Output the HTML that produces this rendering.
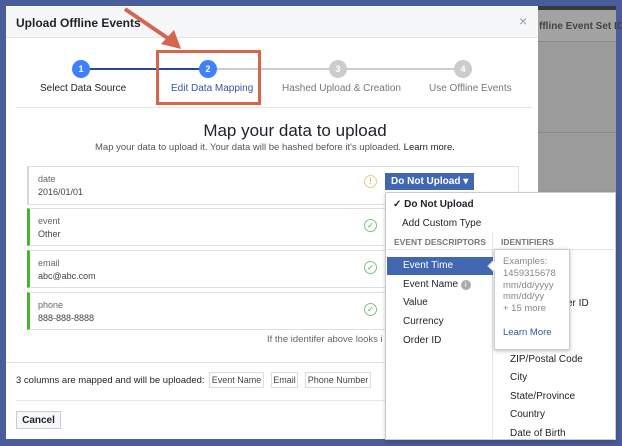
<!DOCTYPE html>
<html><head><style>
*{margin:0;padding:0;box-sizing:border-box}
body{width:622px;height:446px;overflow:hidden;background:#4a5c9c;font-family:"Liberation Sans",sans-serif;position:relative;color:#1d2129}
.a{position:absolute}
.t{position:absolute;white-space:nowrap}
</style></head><body>
<div class="a" style="left:538px;top:6px;width:78px;height:434px;background:#9b9b9b"></div>
<div class="a" style="left:538px;top:6px;width:78px;height:4px;background:#3a3a3a"></div>
<div class="a" style="left:538px;top:10px;width:78px;height:32px;background:#a3a3a3;border-bottom:1px solid #888"></div>
<div class="t" style="left:539px;top:21px;font-size:10px;font-weight:bold;color:#444">ffline Event Set ID</div>
<div class="a" style="left:538px;top:132px;width:78px;height:1px;background:#888"></div>
<div class="a" style="left:6px;top:6px;width:532px;height:433px;background:#fff"></div>
<div class="a" style="left:6px;top:6px;width:532px;height:32px;background:#f6f7f9;border-bottom:1px solid #e5e5e5"></div>
<div class="t" style="left:16px;top:16px;font-size:12px;font-weight:bold">Upload Offline Events</div>
<div class="t" style="left:519px;top:13px;font-size:14px;color:#999">×</div>
<div class="a" style="left:81px;top:68px;width:127px;height:2px;background:#2c4a8c"></div>
<div class="a" style="left:208px;top:68px;width:255px;height:2px;background:#ccc"></div>
<div class="a" style="left:72px;top:60px;width:18px;height:18px;border-radius:50%;background:#4080ff;color:#fff;font-size:9px;font-weight:bold;text-align:center;line-height:18px">1</div>
<div class="a" style="left:199px;top:60px;width:18px;height:18px;border-radius:50%;background:#4080ff;color:#fff;font-size:9px;font-weight:bold;text-align:center;line-height:18px">2</div>
<div class="a" style="left:329px;top:60px;width:18px;height:18px;border-radius:50%;background:#ccc;color:#fff;font-size:9px;font-weight:bold;text-align:center;line-height:18px">3</div>
<div class="a" style="left:454px;top:60px;width:18px;height:18px;border-radius:50%;background:#ccc;color:#fff;font-size:9px;font-weight:bold;text-align:center;line-height:18px">4</div>
<div class="t" style="left:40px;top:83px;font-size:10px">Select Data Source</div>
<div class="t" style="left:171px;top:83px;font-size:10px;color:#365899">Edit Data Mapping</div>
<div class="t" style="left:282px;top:83px;font-size:10px;color:#777">Hashed Upload &amp; Creation</div>
<div class="t" style="left:429px;top:83px;font-size:10px;color:#777">Use Offline Events</div>
<div class="a" style="left:16px;top:107px;width:516px;height:1px;background:#e5e5e5"></div>
<div class="a" style="left:156px;top:50px;width:105px;height:55px;border:3px solid #d5654f"></div>
<svg class="a" style="left:115px;top:3px" width="80" height="50"><path d="M10 6 L54 36" stroke="#d5654f" stroke-width="4"/><path d="M46 41 L66 46 L59 27 Z" fill="#d5654f"/></svg>
<div class="t" style="left:0;width:540px;top:121px;text-align:center;font-size:17px;padding-left:50px">Map your data to upload</div>
<div class="t" style="left:95px;top:142px;font-size:9.5px;color:#555">Map your data to upload it. Your data will be hashed before it's uploaded. <span style="color:#1d2129">Learn more.</span></div>
<div class="a" style="left:27px;top:166px;width:492px;height:39px;border:1px solid #e0e0e0;border-left:2px solid #d8d8d8"></div>
<div class="t" style="left:38px;top:174px;font-size:9px;color:#666">date</div>
<div class="t" style="left:38px;top:187px;font-size:9px;color:#444">2016/01/01</div>
<div class="a" style="left:364px;top:175px;width:13px;height:13px;border-radius:50%;border:1px solid #e8c98a;color:#d9a441;font-size:9px;text-align:center;line-height:11px">!</div>
<div class="a" style="left:27px;top:208px;width:492px;height:38px;border:1px solid #e0e0e0;border-left:3px solid #42b72a"></div>
<div class="t" style="left:38px;top:216px;font-size:9px;color:#666">event</div>
<div class="t" style="left:38px;top:229px;font-size:9px;color:#444">Other</div>
<div class="a" style="left:364px;top:219px;width:13px;height:13px;border-radius:50%;border:1px solid #7bc47f;color:#42b72a;font-size:8px;text-align:center;line-height:11px">✓</div>
<div class="a" style="left:27px;top:250px;width:492px;height:38px;border:1px solid #e0e0e0;border-left:3px solid #42b72a"></div>
<div class="t" style="left:38px;top:258px;font-size:9px;color:#666">email</div>
<div class="t" style="left:38px;top:271px;font-size:9px;color:#444">abc@abc.com</div>
<div class="a" style="left:364px;top:261px;width:13px;height:13px;border-radius:50%;border:1px solid #7bc47f;color:#42b72a;font-size:8px;text-align:center;line-height:11px">✓</div>
<div class="a" style="left:27px;top:292px;width:492px;height:38px;border:1px solid #e0e0e0;border-left:3px solid #42b72a"></div>
<div class="t" style="left:38px;top:300px;font-size:9px;color:#666">phone</div>
<div class="t" style="left:38px;top:313px;font-size:9px;color:#444">888-888-8888</div>
<div class="a" style="left:364px;top:303px;width:13px;height:13px;border-radius:50%;border:1px solid #7bc47f;color:#42b72a;font-size:8px;text-align:center;line-height:11px">✓</div>
<div class="t" style="left:267px;top:334px;font-size:9.5px;color:#666">If the identifer above looks i</div>
<div class="a" style="left:6px;top:362px;width:532px;height:1px;background:#e0e0e0"></div>
<div class="t" style="left:16px;top:375px;font-size:9.5px">3 columns are mapped and will be uploaded:</div>
<div class="t" style="left:209px;top:372px;width:55px;font-size:9px;color:#444;border:1px solid #ddd;padding:2px 0;text-align:center">Event Name</div>
<div class="t" style="left:271px;top:372px;width:27px;font-size:9px;color:#444;border:1px solid #ddd;padding:2px 0;text-align:center">Email</div>
<div class="t" style="left:305px;top:372px;width:66px;font-size:9px;color:#444;border:1px solid #ddd;padding:2px 0;text-align:center">Phone Number</div>
<div class="a" style="left:16px;top:400px;width:520px;height:1px;background:#e5e5e5"></div>
<div class="t" style="left:16px;top:411px;width:45px;height:18px;font-size:10px;font-weight:bold;border:1px solid #ccc;background:#f6f7f9;text-align:center;line-height:17px">Cancel</div>
<div class="t" style="left:385px;top:173px;width:89px;height:17px;background:#4267b2;color:#fff;font-size:10px;font-weight:bold;line-height:17px;padding-left:6px">Do Not Upload ▾</div>
<div class="a" style="left:385px;top:192px;width:231px;height:248px;background:#fff;border:1px solid #ccc;box-shadow:0 2px 4px rgba(0,0,0,.2)"></div>
<div class="a" style="left:492px;top:232px;width:1px;height:208px;background:#e5e5e5"></div>
<div class="a" style="left:386px;top:249px;width:230px;height:1px;background:#e5e5e5"></div>
<div class="t" style="left:393px;top:199px;font-size:10px;font-weight:bold">✓ Do Not Upload</div>
<div class="t" style="left:402px;top:218px;font-size:10px">Add Custom Type</div>
<div class="t" style="left:394px;top:237px;font-size:8.5px;color:#777;font-weight:bold">EVENT DESCRIPTORS</div>
<div class="t" style="left:501px;top:237px;font-size:8.5px;color:#777;font-weight:bold">IDENTIFIERS</div>
<div class="a" style="left:387px;top:257px;width:106px;height:18px;background:#4267b2"></div>
<div class="t" style="left:403px;top:260px;font-size:10px;color:#fff">Event Time</div>
<div class="t" style="left:403px;top:279px;font-size:10px">Event Name <span style="display:inline-block;width:10px;height:10px;border-radius:50%;background:#aaa;color:#fff;font-size:8px;text-align:center;line-height:10px">i</span></div>
<div class="t" style="left:403px;top:297px;font-size:10px">Value</div>
<div class="t" style="left:403px;top:316px;font-size:10px">Currency</div>
<div class="t" style="left:403px;top:335px;font-size:10px">Order ID</div>
<div class="t" style="left:560px;top:280px;font-size:10px">er</div>
<div class="t" style="left:562px;top:298px;font-size:10px">ser ID</div>
<div class="t" style="left:510px;top:354px;font-size:10px">ZIP/Postal Code</div>
<div class="t" style="left:510px;top:372px;font-size:10px">City</div>
<div class="t" style="left:510px;top:391px;font-size:10px">State/Province</div>
<div class="t" style="left:510px;top:409px;font-size:10px">Country</div>
<div class="t" style="left:510px;top:428px;font-size:10px">Date of Birth</div>
<div class="a" style="left:494px;top:249px;width:76px;height:101px;background:#fff;border:1px solid #ccc;box-shadow:0 1px 4px rgba(0,0,0,.25)"></div>
<div class="a" style="left:489px;top:262px;width:8px;height:8px;background:#fff;border-left:1px solid #ccc;border-bottom:1px solid #ccc;transform:rotate(45deg)"></div>
<div class="t" style="left:503px;top:256px;font-size:9.5px;color:#888;line-height:11.8px">Examples:<br>1459315678<br>mm/dd/yyyy<br>mm/dd/yy<br>+ 15 more</div>
<div class="t" style="left:503px;top:327px;font-size:9.5px;color:#365899">Learn More</div>
</body></html>
